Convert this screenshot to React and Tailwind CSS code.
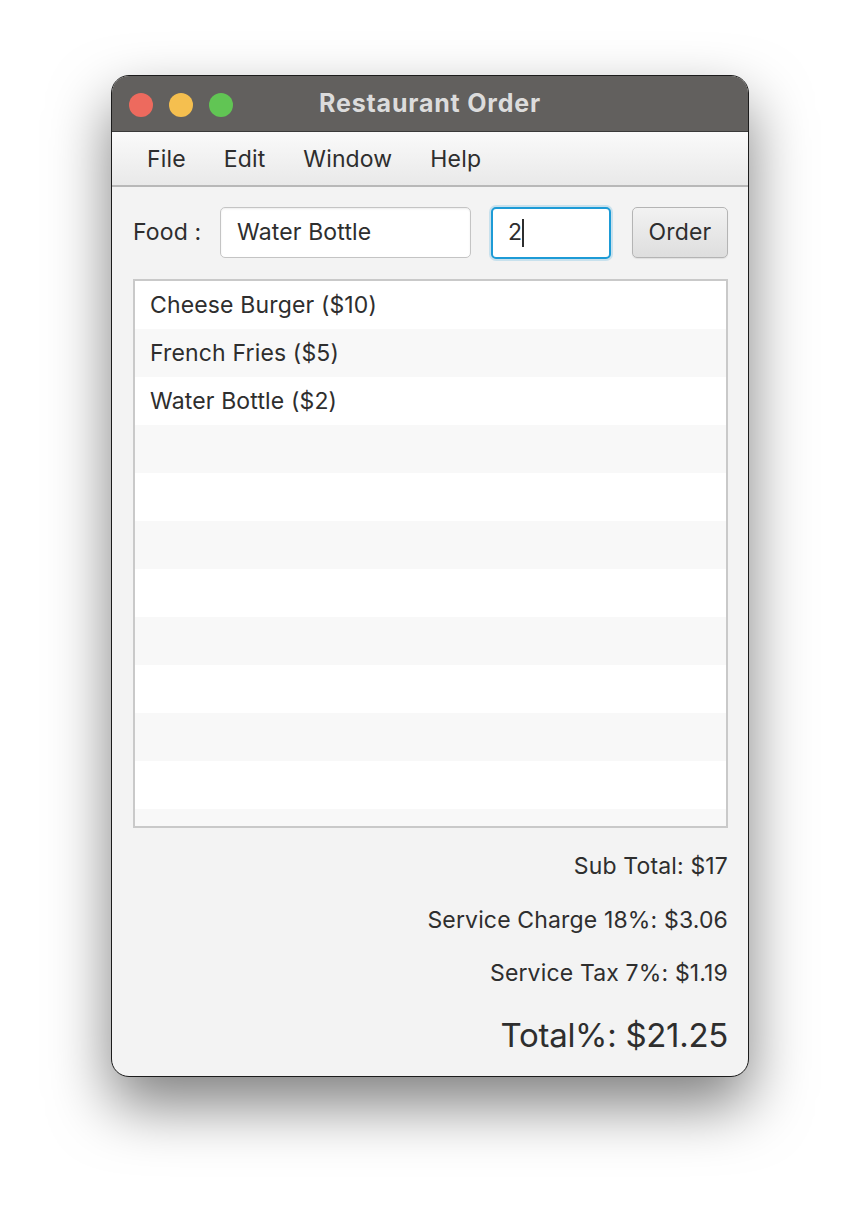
import React from 'react';

const items = ['Cheese Burger ($10)', 'French Fries ($5)', 'Water Bottle ($2)'];

export default function App() {
  const rows = Array.from({ length: 12 }, (_, i) => items[i] ?? '');

  return (
    <div className="min-h-[1224px] bg-white pt-[75px] pl-[111px]" style={{ fontFamily: 'Inter, "Noto Sans", sans-serif' }}>
      <div className="w-[638px] h-[1002px] rounded-[18px] border border-[#1c1c1c] bg-[#f3f3f3] overflow-hidden flex flex-col shadow-[0_28px_60px_rgba(0,0,0,0.5)]">
        {/* Title bar */}
        <div className="relative h-[56px] shrink-0 bg-[#62605e] flex items-center justify-center border-b border-[#3a3a3a]">
          <div className="absolute left-[17px] top-[17px] flex gap-[16px]">
            <span className="w-[24px] h-[24px] rounded-full bg-[#ed6a5e]" />
            <span className="w-[24px] h-[24px] rounded-full bg-[#f5bf4f]" />
            <span className="w-[24px] h-[24px] rounded-full bg-[#61c554]" />
          </div>
          <span className="text-[25px] font-bold text-[#dcdcdc] tracking-[0.8px]">Restaurant Order</span>
        </div>

        {/* Menu bar */}
        <div className="h-[55px] shrink-0 flex items-center pl-[35px] gap-[38px] text-[23px] text-[#2e2e2e] bg-gradient-to-b from-[#fafafa] to-[#e9e9e9] border-b-2 border-[#b8b8b8] tracking-[0.15px] pt-[2px]">
          <span>File</span>
          <span>Edit</span>
          <span>Window</span>
          <span>Help</span>
        </div>

        {/* Content */}
        <div className="flex-1 flex flex-col pr-[20px] pl-[21px] pt-[20px]">
          <div className="flex items-center h-[51px] text-[23px] text-[#2e2e2e] tracking-[0.15px]">
            <span className="w-[87px]">Food :</span>
            <div className="w-[251px] h-[51px] rounded-[5px] border border-[#c4c4c4] bg-white flex items-center pl-[16px] shadow-[inset_0_1px_2px_rgba(0,0,0,0.08)]">
              Water Bottle
            </div>
            <div className="ml-[20px] w-[120px] h-[52px] rounded-[5px] border-2 border-[#1d9bd6] bg-white flex items-center pl-[15px] shadow-[0_0_0_2px_rgba(29,155,214,0.2)]">
              <span>2</span>
              <span className="w-[1.5px] h-[28px] bg-[#2e2e2e]" />
            </div>
            <div className="ml-[21px] w-[96px] h-[51px] rounded-[5px] border border-[#b4b4b4] bg-gradient-to-b from-[#f2f2f2] to-[#dedede] flex items-center justify-center shadow-[0_1px_1px_rgba(0,0,0,0.08)]">
              Order
            </div>
          </div>

          <div className="mt-[21px] h-[549px] border-2 border-[#c9c9c9] bg-white overflow-hidden">
            {rows.map((t, i) => (
              <div
                key={i}
                className={`h-[48px] flex items-center pl-[15px] text-[23px] text-[#2e2e2e] tracking-[0.15px] ${i % 2 === 0 ? 'bg-white' : 'bg-[#f8f8f8]'}`}
              >
                {t}
              </div>
            ))}
          </div>

          <div className="flex flex-col items-end text-[#2e2e2e]">
            <div className="mt-[23px] h-[30px] flex items-center text-[23px] tracking-[0.15px]">Sub Total: $17</div>
            <div className="mt-[24px] h-[30px] flex items-center text-[23px] tracking-[0.15px]">Service Charge 18%: $3.06</div>
            <div className="mt-[23px] h-[30px] flex items-center text-[23px] tracking-[0.15px]">Service Tax 7%: $1.19</div>
            <div className="mt-[28px] h-[40px] flex items-center text-[33px] tracking-[-0.3px]">Total%: $21.25</div>
          </div>
        </div>
      </div>
    </div>
  );
}
